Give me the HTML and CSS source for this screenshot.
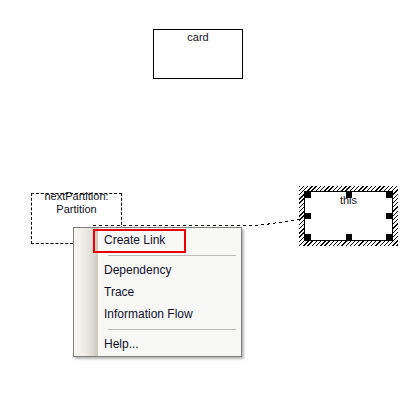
FILE: index.html
```html
<!DOCTYPE html>
<html>
<head>
<meta charset="utf-8">
<link rel="stylesheet" href="styles.css">
</head>
<body>
<div class="canvas">
  <svg class="links" width="416" height="400" viewBox="0 0 416 400">
    <polyline points="93,225.5 258,225.5 300,219.5" fill="none" stroke="#000" stroke-width="1" stroke-dasharray="3 3" shape-rendering="crispEdges"/>
  </svg>
  <div class="node card">card</div>
  <div class="node partition">nextPartition:<br>Partition</div>
  <div class="selection">
    <div class="node-this">this
      <span class="handle tl"></span><span class="handle tm"></span><span class="handle tr"></span>
      <span class="handle ml"></span><span class="handle mr"></span>
      <span class="handle bl"></span><span class="handle bm"></span><span class="handle br"></span>
    </div>
  </div>
  <div class="menu">
    <div class="gutter"></div>
    <ul class="items">
      <li class="item">Create Link</li>
      <li class="sep"></li>
      <li class="item">Dependency</li>
      <li class="item">Trace</li>
      <li class="item">Information Flow</li>
      <li class="sep"></li>
      <li class="item">Help...</li>
    </ul>
  </div>
  <div class="highlight"></div>
</div>
</body>
</html>
```

FILE: styles.css
```css
html, body {
  margin: 0;
  padding: 0;
  background: #fff;
}

.canvas {
  position: relative;
  width: 416px;
  height: 400px;
  overflow: hidden;
  font-family: "Liberation Sans", Arial, sans-serif;
  color: #111122;
}

.links {
  position: absolute;
  left: 0;
  top: 0;
}

.node {
  position: absolute;
  box-sizing: border-box;
  font-size: 11px;
  line-height: 13px;
  text-align: center;
}

.card {
  left: 153px;
  top: 29px;
  width: 90px;
  height: 50px;
  border: 1px solid #000;
  padding-top: 1px;
  background: #fff;
}

.partition {
  left: 31px;
  top: 193px;
  width: 91px;
  height: 51px;
  border: 1px dashed #000;
  padding-top: 0;
}

.partition::before {
  content: "";
  display: block;
  margin-top: -4px;
}

.selection {
  position: absolute;
  left: 299px;
  top: 186px;
  width: 99px;
  height: 60px;
  box-sizing: border-box;
  padding: 5px;
  background: repeating-linear-gradient(135deg, #000 0 1px, #fff 1px 3px);
}

.node-this {
  position: relative;
  box-sizing: border-box;
  width: 89px;
  height: 50px;
  border: 1px solid #000;
  background: #fff;
  font-size: 11px;
  line-height: 13px;
  text-align: center;
  padding-top: 2px;
}

.handle {
  position: absolute;
  width: 6px;
  height: 6px;
  background: #000;
}

.handle.tl { left: 0; top: 0; }
.handle.tm { left: 41px; top: 0; }
.handle.tr { left: 81px; top: 0; }
.handle.ml { left: 0; top: 21px; }
.handle.mr { left: 81px; top: 21px; }
.handle.bl { left: 0; top: 42px; }
.handle.bm { left: 41px; top: 42px; }
.handle.br { left: 81px; top: 42px; }

.menu {
  position: absolute;
  left: 73px;
  top: 227px;
  width: 169px;
  height: 130px;
  box-sizing: border-box;
  border: 1px solid #808080;
  background: #f8f8f6;
  box-shadow: 2px 2px 2px rgba(0, 0, 0, 0.28);
  display: flex;
}

.gutter {
  width: 24px;
  flex: none;
  background: linear-gradient(to right, #f8f7f4 0%, #eeece6 45%, #dcd9d0 80%, #cbc7bc 100%);
}

.items {
  list-style: none;
  margin: 0;
  padding: 1px 0 0 0;
  flex: 1;
  font-size: 12px;
}

.item {
  height: 22px;
  line-height: 22px;
  padding-left: 6px;
  color: #10102a;
}

.sep {
  height: 1px;
  margin: 4px 5px 3px 10px;
  background: #bcbcbc;
}

.highlight {
  position: absolute;
  left: 93px;
  top: 229px;
  width: 93px;
  height: 24px;
  box-sizing: border-box;
  border: 2px solid #e5000a;
}
```
